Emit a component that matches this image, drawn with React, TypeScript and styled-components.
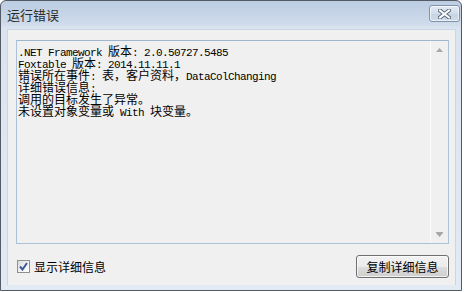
import styled, { createGlobalStyle } from 'styled-components'

const GlobalStyle = createGlobalStyle`
  body {
    margin: 0;
    background: #ffffff;
  }
`

const Window = styled.div`
  width: 462px;
  height: 291px;
  box-sizing: border-box;
  border: 1px solid #555b66;
  border-radius: 6px 6px 0 0;
  background: linear-gradient(#bccde2 0px, #cddaea 22px, #dae4f0 27px, #e2eaf4 100%);
  display: flex;
  flex-direction: column;
  font-family: "Noto Sans CJK SC", sans-serif;
  overflow: hidden;
`

const TitleBar = styled.div`
  height: 28px;
  display: flex;
  align-items: flex-start;
  justify-content: space-between;
  padding: 0 1px 0 6px;
`

const Title = styled.div`
  font-size: 13px;
  line-height: 13px;
  margin-top: 7px;
  color: #2b2b2b;
`

const CloseButton = styled.div`
  width: 31px;
  height: 17px;
  margin-top: 4px;
  box-sizing: border-box;
  border: 1px solid #8093ab;
  border-radius: 3px;
  background: linear-gradient(#e3eaf3 0%, #d3deeb 50%, #c5d3e4 51%, #cfdbe9 100%);
  box-shadow: inset 0 0 0 1px rgba(255, 255, 255, 0.6);
  display: flex;
  align-items: center;
  justify-content: center;
`

const Client = styled.div`
  flex: 1;
  margin: 0 5px 5px 6px;
  background: #f0f0f0;
  border: 1px solid #c9d6e6;
  border-bottom: none;
  padding: 10px 6px 6px 8px;
  display: flex;
  flex-direction: column;
`

const TextBox = styled.div`
  height: 204px;
  box-sizing: border-box;
  border: 1px solid #abc1d8;
  border-top-color: #9fb6cf;
  background: #f0f0f0;
  display: flex;
`

const TextArea = styled.div`
  flex: 1;
  padding: 2px 1px;
  color: #000000;
`

const Line = styled.div`
  height: 12px;
  line-height: 12px;
  white-space: pre;
`

const Ascii = styled.span`
  font-family: "Liberation Mono", monospace;
  font-size: 11px;
  letter-spacing: -0.6px;
`

const Cjk = styled.span`
  font-family: "Noto Sans CJK SC", sans-serif;
  font-size: 12px;
`

const ScrollBar = styled.div`
  width: 17px;
  border-left: 1px solid #fbfbfb;
  background: #f0f0f0;
  display: flex;
  flex-direction: column;
  justify-content: space-between;
`

const ArrowBox = styled.div`
  height: 17px;
  display: flex;
  align-items: center;
  justify-content: center;
`

const Footer = styled.div`
  margin-top: 11px;
  display: flex;
  align-items: center;
  justify-content: space-between;
`

const CheckRow = styled.label`
  display: flex;
  align-items: center;
  gap: 4px;
  margin-left: 1px;
  font-size: 12px;
  color: #000000;
`

const CheckBox = styled.div`
  width: 13px;
  height: 13px;
  box-sizing: border-box;
  border: 1px solid #8e8f8f;
  background: linear-gradient(135deg, #dcdcdc 0%, #f4f4f4 60%, #ffffff 100%);
  display: flex;
  align-items: center;
  justify-content: center;
`

const Button = styled.div`
  width: 93px;
  height: 23px;
  box-sizing: border-box;
  border: 1px solid #707070;
  border-radius: 3px;
  background: linear-gradient(#f2f2f2 0%, #ebebeb 50%, #dddddd 51%, #cfcfcf 100%);
  box-shadow: inset 0 0 0 1px rgba(255, 255, 255, 0.7);
  font-size: 12px;
  color: #000000;
  display: flex;
  align-items: center;
  justify-content: center;
`

const lines = [
  '.NET Framework 版本: 2.0.50727.5485',
  'Foxtable 版本: 2014.11.11.1',
  '错误所在事件: 表，客户资料，DataColChanging',
  '详细错误信息:',
  '调用的目标发生了异常。',
  '未设置对象变量或 With 块变量。',
]

const MixedLine = ({ text }: { text: string }) => {
  const parts = text.split(/([\x20-\x7e]+)/).filter((p) => p.length > 0)
  return (
    <Line>
      {parts.map((p, i) =>
        /^[\x20-\x7e]+$/.test(p) ? <Ascii key={i}>{p}</Ascii> : <Cjk key={i}>{p}</Cjk>
      )}
    </Line>
  )
}

const CloseIcon = () => (
  <svg width="13" height="10" viewBox="0 0 13 10">
    <path d="M2 1.5 L11 8.5 M11 1.5 L2 8.5" stroke="#5b6779" strokeWidth="4" strokeLinecap="square" />
    <path d="M2 1.5 L11 8.5 M11 1.5 L2 8.5" stroke="#ffffff" strokeWidth="2" strokeLinecap="square" />
  </svg>
)

const UpArrow = () => (
  <svg width="7" height="4" viewBox="0 0 7 4">
    <path d="M3.5 0 L7 4 L0 4 Z" fill="#a8a8a8" />
  </svg>
)

const DownArrow = () => (
  <svg width="7" height="5" viewBox="0 0 7 5">
    <rect x="0" y="0" width="7" height="1" fill="#a8a8a8" />
    <path d="M0 1 L7 1 L3.5 5 Z" fill="#a8a8a8" />
  </svg>
)

const CheckMark = () => (
  <svg width="9" height="9" viewBox="0 0 9 9">
    <path d="M1 4.5 L3.5 7.5 L8 1" fill="none" stroke="#3d5a98" strokeWidth="2" />
  </svg>
)

export default function App() {
  return (
    <>
      <GlobalStyle />
      <Window>
        <TitleBar>
          <Title>运行错误</Title>
          <CloseButton>
            <CloseIcon />
          </CloseButton>
        </TitleBar>
        <Client>
          <TextBox>
            <TextArea>
              {lines.map((l, i) => (
                <MixedLine key={i} text={l} />
              ))}
            </TextArea>
            <ScrollBar>
              <ArrowBox>
                <UpArrow />
              </ArrowBox>
              <ArrowBox>
                <DownArrow />
              </ArrowBox>
            </ScrollBar>
          </TextBox>
          <Footer>
            <CheckRow>
              <CheckBox>
                <CheckMark />
              </CheckBox>
              显示详细信息
            </CheckRow>
            <Button>复制详细信息</Button>
          </Footer>
        </Client>
      </Window>
    </>
  )
}
